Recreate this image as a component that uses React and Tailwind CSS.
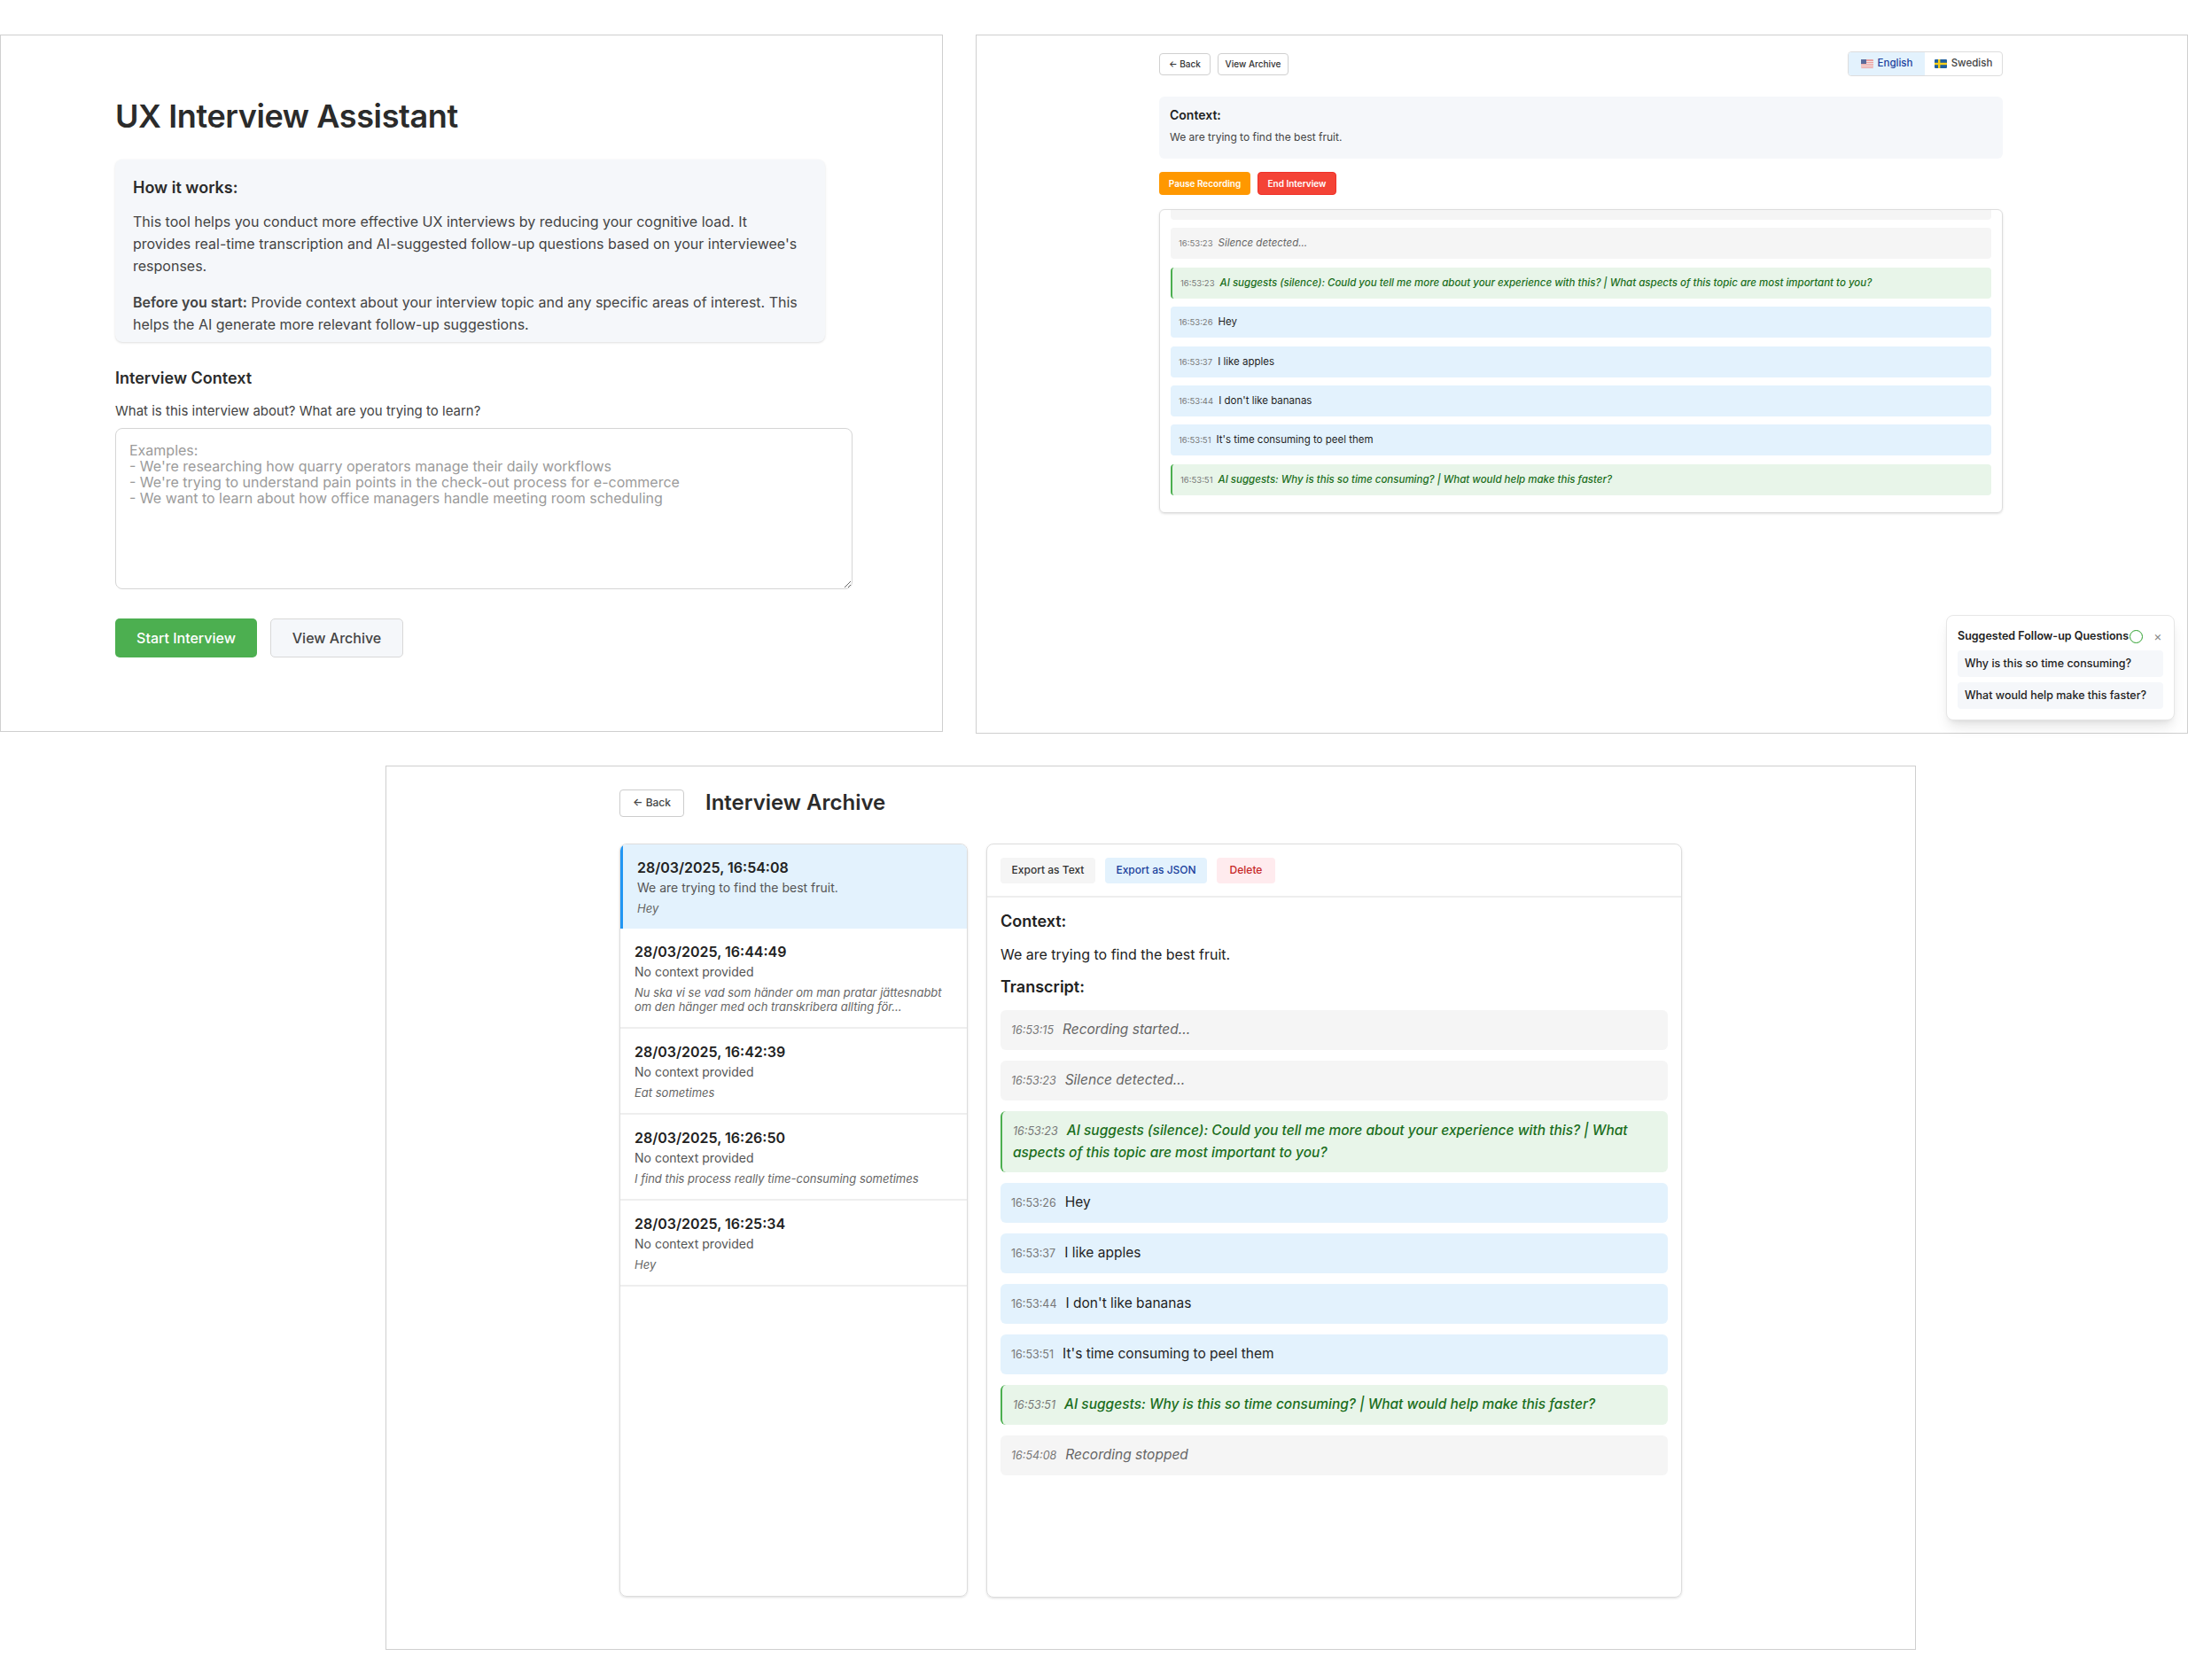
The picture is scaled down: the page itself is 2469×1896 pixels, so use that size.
const liveItems = [
  { kind: 'system', time: '16:53:15', text: 'Recording started...' },
  { kind: 'system', time: '16:53:23', text: 'Silence detected...' },
  { kind: 'ai', time: '16:53:23', text: 'AI suggests (silence): Could you tell me more about your experience with this? | What aspects of this topic are most important to you?' },
  { kind: 'user', time: '16:53:26', text: 'Hey' },
  { kind: 'user', time: '16:53:37', text: 'I like apples' },
  { kind: 'user', time: '16:53:44', text: "I don't like bananas" },
  { kind: 'user', time: '16:53:51', text: "It's time consuming to peel them" },
  { kind: 'ai', time: '16:53:51', text: 'AI suggests: Why is this so time consuming? | What would help make this faster?' },
];

const archiveItems = [...liveItems, { kind: 'system', time: '16:54:08', text: 'Recording stopped' }];

const sessions = [
  { date: '28/03/2025, 16:54:08', context: 'We are trying to find the best fruit.', preview: 'Hey', active: true },
  { date: '28/03/2025, 16:44:49', context: 'No context provided', preview: 'Nu ska vi se vad som händer om man pratar jättesnabbt om den hänger med och transkribera allting för...' },
  { date: '28/03/2025, 16:42:39', context: 'No context provided', preview: 'Eat sometimes' },
  { date: '28/03/2025, 16:26:50', context: 'No context provided', preview: 'I find this process really time-consuming sometimes' },
  { date: '28/03/2025, 16:25:34', context: 'No context provided', preview: 'Hey' },
];

const placeholder = `Examples:
- We're researching how quarry operators manage their daily workflows
- We're trying to understand pain points in the check-out process for e-commerce
- We want to learn about how office managers handle meeting room scheduling`;

const kindStyles = {
  system: 'bg-[#f5f5f5] text-[#666666] italic',
  ai: 'bg-[#e8f5e9] text-[#1b6e20] italic font-medium border-l-2 border-[#4caf50]',
  user: 'bg-[#e3f2fd] text-[#1f1f1f]',
};

const FlagUS = () => (
  <svg width="14" height="10" viewBox="0 0 14 10" className="shrink-0">
    <rect width="14" height="10" rx="1" fill="#e8a0a0" />
    <rect y="2" width="14" height="1" fill="#f4e4e4" />
    <rect y="4" width="14" height="1" fill="#f4e4e4" />
    <rect y="6" width="14" height="1" fill="#f4e4e4" />
    <rect y="8" width="14" height="1" fill="#f4e4e4" />
    <rect width="6" height="5" fill="#5a6a9c" />
  </svg>
);

const FlagSE = () => (
  <svg width="14" height="10" viewBox="0 0 14 10" className="shrink-0">
    <rect width="14" height="10" rx="1" fill="#1f5f9e" />
    <rect x="4" width="2.4" height="10" fill="#f5cf1c" />
    <rect y="3.8" width="14" height="2.4" fill="#f5cf1c" />
  </svg>
);

const LiveEntry = ({ item }) => (
  <div className={`rounded-[4px] px-[9px] py-[9px] text-[11.5px] leading-[16px] ${kindStyles[item.kind]}`}>
    <span className="mr-[6px] text-[9.5px] font-normal not-italic text-[#777777]">{item.time}</span>
    {item.text}
  </div>
);

const ArchiveEntry = ({ item }) => (
  <div className={`rounded-[6px] px-[12px] py-[10px] text-[15.5px] leading-[24px] ${kindStyles[item.kind]}`}>
    <span className="mr-[10px] text-[12.5px] font-normal text-[#777777]">{item.time}</span>
    {item.text}
  </div>
);

const StartPanel = () => (
  <div className="h-[787px] w-[1064px] shrink-0 border border-[#cfcfcf] pl-[129px] pt-[69px]">
    <h1 className="text-[36px] font-semibold leading-[44px] text-[#2b2b2b] tracking-[-0.4px]">UX Interview Assistant</h1>
    <div className="mt-[27px] h-[206px] w-[801px] rounded-[8px] bg-[#f5f7fa] p-[20px] shadow-sm">
      <h3 className="text-[18px] font-semibold leading-[24px] text-[#2b2b2b]">How it works:</h3>
      <p className="mt-[14px] text-[16px] leading-[25px] text-[#444444]">
        This tool helps you conduct more effective UX interviews by reducing your cognitive load. It provides real-time transcription and AI-suggested follow-up questions based on your interviewee's responses.
      </p>
      <p className="mt-[16px] text-[16px] leading-[25px] text-[#444444]">
        <strong className="font-semibold">Before you start:</strong> Provide context about your interview topic and any specific areas of interest. This helps the AI generate more relevant follow-up suggestions.
      </p>
    </div>
    <h2 className="mt-[29px] text-[18px] font-semibold leading-[24px] text-[#2b2b2b]">Interview Context</h2>
    <label className="mt-[14px] block text-[15px] leading-[22px] text-[#444444]">What is this interview about? What are you trying to learn?</label>
    <textarea
      placeholder={placeholder}
      className="mt-[8px] block h-[182px] w-[832px] rounded-[8px] border border-[#d5d5d5] px-[15px] py-[15px] text-[16px] leading-[18px] placeholder:text-[#9b9b9b]"
    />
    <div className="mt-[33px] flex gap-[15px]">
      <button className="h-[44px] w-[160px] rounded-[5px] bg-[#4caf50] text-[16px] font-medium text-white">Start Interview</button>
      <button className="h-[44px] w-[150px] rounded-[5px] border border-[#d8d8d8] bg-[#f5f7fa] text-[16px] font-medium text-[#444444]">View Archive</button>
    </div>
  </div>
);

const LivePanel = () => (
  <div className="relative ml-[37px] h-[789px] w-[1368px] shrink-0 border border-[#cfcfcf] pl-[206px] pt-[18px]">
    <div className="flex w-[952px] items-center justify-between">
      <div className="flex gap-[8px]">
        <button className="h-[25px] w-[58px] rounded-[4px] border border-[#d0d0d0] bg-white text-[10px] font-medium text-[#333333]">← Back</button>
        <button className="h-[25px] w-[80px] rounded-[4px] border border-[#d0d0d0] bg-white text-[10px] font-medium text-[#333333]">View Archive</button>
      </div>
      <div className="flex h-[28px] w-[175px] overflow-hidden rounded-[4px] border border-[#dddddd] text-[11.5px] font-medium">
        <div className="flex w-[86px] items-center justify-center gap-[5px] bg-[#e3f2fd] text-[#1a3f9c]"><FlagUS />English</div>
        <div className="flex flex-1 items-center justify-center gap-[5px] text-[#444444]"><FlagSE />Swedish</div>
      </div>
    </div>
    <div className="mt-[23px] h-[70px] w-[952px] rounded-[6px] bg-[#f5f7fa] px-[12px] pt-[11px]">
      <h3 className="text-[14px] font-semibold leading-[20px] text-[#1f1f1f]">Context:</h3>
      <p className="mt-[7px] text-[12px] leading-[16px] text-[#444444]">We are trying to find the best fruit.</p>
    </div>
    <div className="mt-[15px] flex gap-[8px]">
      <button className="h-[26px] w-[103px] rounded-[4px] bg-[#ff9800] text-[10px] font-semibold text-white">Pause Recording</button>
      <button className="h-[26px] w-[89px] rounded-[4px] border border-[#f03028] bg-[#f44336] text-[10px] font-semibold text-white">End Interview</button>
    </div>
    <div className="mt-[16px] h-[343px] w-[952px] overflow-hidden rounded-[6px] border border-[#dddddd] px-[12px] shadow-sm">
      <div className="-mt-[24px] flex flex-col gap-[9.4px]">
        {liveItems.map((item, i) => <LiveEntry key={i} item={item} />)}
      </div>
    </div>
    <div className="absolute bottom-[14px] right-[14px] w-[258px] rounded-[8px] border border-[#e6e6e6] bg-white px-[12px] pb-[12px] pt-[12px] shadow-lg">
      <div className="flex h-[22px] items-center">
        <span className="text-[12.5px] font-semibold text-[#222222]">Suggested Follow-up Questions</span>
        <span className="ml-px h-[15px] w-[15px] rounded-full border border-[#2ca02c]" />
        <span className="ml-[12px] text-[14px] leading-none text-[#888888]">×</span>
      </div>
      <div className="mt-[5px] flex flex-col gap-[6px]">
        <div className="flex h-[30px] items-center rounded-[4px] bg-[#f5f7fa] px-[8px] text-[12.5px] font-medium text-[#222222]">Why is this so time consuming?</div>
        <div className="flex h-[30px] items-center rounded-[4px] bg-[#f5f7fa] px-[8px] text-[12.5px] font-medium text-[#222222]">What would help make this faster?</div>
      </div>
    </div>
  </div>
);

const ArchivePanel = () => (
  <div className="ml-[435px] mt-[36px] h-[998px] w-[1727px] border border-[#cfcfcf] pl-[263px] pt-[25px]">
    <div className="flex items-center gap-[24px]">
      <button className="h-[31px] w-[73px] rounded-[4px] border border-[#cccccc] bg-white text-[12px] font-medium text-[#444444]">← Back</button>
      <h2 className="text-[24px] font-semibold leading-[32px] text-[#2b2b2b]">Interview Archive</h2>
    </div>
    <div className="mt-[30px] flex gap-[21px]">
      <div className="h-[850px] w-[393px] overflow-hidden rounded-[8px] border border-[#dddddd] shadow-sm">
        {sessions.map((s) => (
          <div
            key={s.date}
            className={s.active ? 'border-l-[3px] border-[#2196f3] bg-[#e3f2fd] px-[16px] pb-[15px] pt-[15px]' : 'border-b-2 border-[#eeeeee] px-[16px] pb-[15px] pt-[15px]'}
          >
            <div className="text-[16px] font-semibold leading-[22px] text-[#222222]">{s.date}</div>
            <div className="mt-[1px] text-[14px] leading-[22px] text-[#555555]">{s.context}</div>
            <div className="mt-[4px] text-[13px] leading-[16px] italic text-[#666666]">{s.preview}</div>
          </div>
        ))}
      </div>
      <div className="h-[851px] w-[785px] overflow-hidden rounded-[8px] border border-[#dddddd] shadow-sm">
        <div className="flex h-[60px] items-center gap-[11px] border-b-2 border-[#eeeeee] px-[15px]">
          <button className="h-[29px] w-[107px] rounded-[4px] bg-[#f5f5f5] text-[12px] font-medium text-[#333333]">Export as Text</button>
          <button className="h-[29px] w-[115px] rounded-[4px] bg-[#e3f2fd] text-[12px] font-medium text-[#1a3f9c]">Export as JSON</button>
          <button className="h-[29px] w-[66px] rounded-[4px] bg-[#ffebee] text-[12px] font-medium text-[#c62828]">Delete</button>
        </div>
        <div className="px-[15px] pt-[14px]">
          <h3 className="text-[18px] font-semibold leading-[26px] text-[#222222]">Context:</h3>
          <p className="mt-[12px] text-[16px] leading-[24px] text-[#222222]">We are trying to find the best fruit.</p>
          <h3 className="mt-[12px] text-[18px] font-semibold leading-[26px] text-[#222222]">Transcript:</h3>
          <div className="mt-[13px] flex flex-col gap-[12px]">
            {archiveItems.map((item, i) => <ArchiveEntry key={i} item={item} />)}
          </div>
        </div>
      </div>
    </div>
  </div>
);

const App = () => (
  <div className="min-h-screen bg-white pt-[39px] font-['Inter',sans-serif]">
    <div className="flex">
      <StartPanel />
      <LivePanel />
    </div>
    <ArchivePanel />
  </div>
);

export default App;
